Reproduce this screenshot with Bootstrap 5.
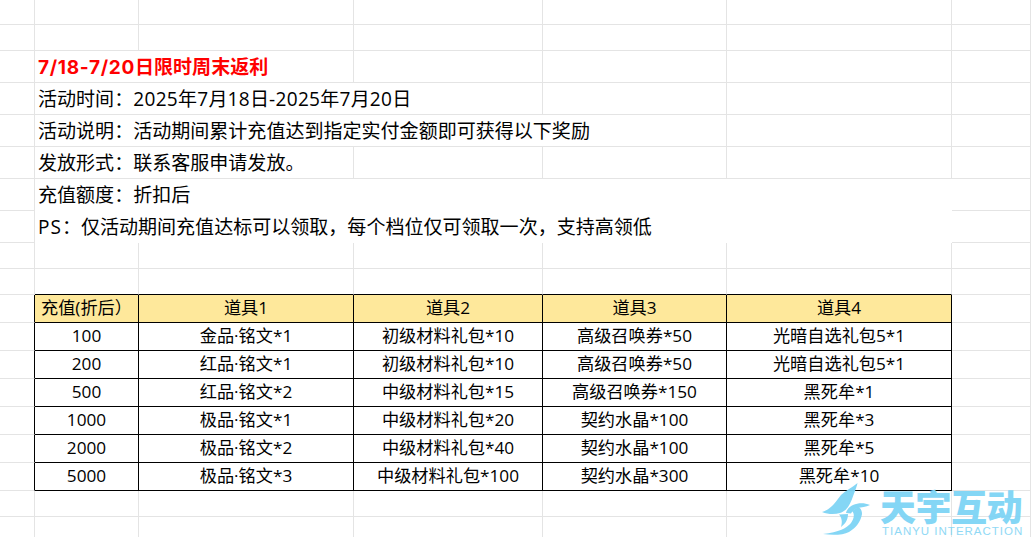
<!DOCTYPE html>
<html lang="zh-CN">
<head>
<meta charset="utf-8">
<title>7/18-7/20日限时周末返利</title>
<link href="https://cdn.jsdelivr.net/npm/bootstrap@5.3.0/dist/css/bootstrap.min.css" rel="stylesheet">
<style>
html,body{margin:0;height:537px;overflow:hidden;background:#fff}
body{font-family:"Open Sans","Noto Sans CJK SC",sans-serif;color:#000;position:relative}
.sheet{table-layout:fixed;width:1031px;border-collapse:separate;border-spacing:0}
.sheet td{border:0 solid #e4e4e4;border-width:0 1px 1px 0;padding:0;white-space:nowrap;vertical-align:middle;overflow:visible;line-height:1}
.c0{width:35px}.c1{width:104px}.c2{width:215px}.c3{width:189px}.c4{width:184px}.c5{width:225px}.c6{width:79px}
.h25{height:25px}.h26{height:26px}.h28{height:28px}.h32{height:32px}.h21{height:21px}
.sheet td.note{font-size:19.05px;padding:2px 0 0 3px}
.sheet td.note-title{font-family:Inter,"Noto Sans CJK SC",sans-serif;font-weight:700;color:#f00}
.digits{letter-spacing:.35px}
.note-title .digits{letter-spacing:.7px}
.latin-wide{letter-spacing:1px}
.sheet td.blank{border-right-width:0;border-bottom-width:0}
.sheet td.edge-r{border-right-color:#000}
.sheet td.edge-b{border-bottom-color:#000}
.sheet td.cell{border-color:#000;font-size:17.2px;text-align:center;padding-bottom:1px}
.sheet td.head{background:#fee89b}
.brandmark{position:absolute;left:820px;top:480px;width:211px;height:57px;color:#7ed4f5;pointer-events:none;opacity:.95}
.brandmark svg{position:absolute;left:0;top:0}
.brand-cn{position:absolute;left:60px;top:7px;display:flex;font-family:"Noto Sans CJK SC",sans-serif;font-size:36px;line-height:36px;font-weight:900;letter-spacing:-.5px;white-space:nowrap}
.brand-en{position:absolute;left:62px;top:46px;font-family:"Liberation Sans",sans-serif;font-size:11.5px;line-height:11px;letter-spacing:1px;white-space:nowrap;opacity:.9}
</style>
</head>
<body>
<table class="sheet">
<colgroup><col class="c0"><col class="c1"><col class="c2"><col class="c3"><col class="c4"><col class="c5"><col class="c6"></colgroup>
<tbody>
<tr class="h25"><td></td><td></td><td></td><td></td><td></td><td></td><td></td></tr>
<tr class="h26"><td></td><td></td><td></td><td></td><td></td><td></td><td></td></tr>
<tr class="h32"><td></td><td class="note note-title" colspan="2"><span class="digits">7/18-7/20</span>日限时周末返利</td><td></td><td></td><td></td><td></td></tr>
<tr class="h32"><td></td><td class="note" colspan="3">活动时间：<span class="digits">2025</span>年<span class="digits">7</span>月<span class="digits">18</span>日<span class="digits">-2025</span>年<span class="digits">7</span>月<span class="digits">20</span>日</td><td></td><td></td><td></td></tr>
<tr class="h32"><td></td><td class="note" colspan="4">活动说明：活动期间累计充值达到指定实付金额即可获得以下奖励</td><td></td><td></td></tr>
<tr class="h32"><td></td><td class="note" colspan="2">发放形式：联系客服申请发放。</td><td></td><td></td><td></td><td></td></tr>
<tr class="h32"><td></td><td class="note blank" colspan="5">充值额度：折扣后</td><td></td></tr>
<tr class="h32"><td></td><td class="note blank" colspan="5"><span class="latin-wide">PS</span>：仅活动期间充值达标可以领取，每个档位仅可领取一次，支持高领低</td><td></td></tr>
<tr class="h26"><td></td><td></td><td></td><td></td><td></td><td></td><td></td></tr>
<tr class="h26"><td></td><td class="edge-b"></td><td class="edge-b"></td><td class="edge-b"></td><td class="edge-b"></td><td class="edge-b"></td><td></td></tr>
<tr class="h28"><td class="edge-r"></td><td class="cell head">充值(折后）</td><td class="cell head">道具1</td><td class="cell head">道具2</td><td class="cell head">道具3</td><td class="cell head">道具4</td><td></td></tr>
<tr class="h28"><td class="edge-r"></td><td class="cell">100</td><td class="cell">金品·铭文*1</td><td class="cell">初级材料礼包*10</td><td class="cell">高级召唤券*50</td><td class="cell">光暗自选礼包5*1</td><td></td></tr>
<tr class="h28"><td class="edge-r"></td><td class="cell">200</td><td class="cell">红品·铭文*1</td><td class="cell">初级材料礼包*10</td><td class="cell">高级召唤券*50</td><td class="cell">光暗自选礼包5*1</td><td></td></tr>
<tr class="h28"><td class="edge-r"></td><td class="cell">500</td><td class="cell">红品·铭文*2</td><td class="cell">中级材料礼包*15</td><td class="cell">高级召唤券*150</td><td class="cell">黑死牟*1</td><td></td></tr>
<tr class="h28"><td class="edge-r"></td><td class="cell">1000</td><td class="cell">极品·铭文*1</td><td class="cell">中级材料礼包*20</td><td class="cell">契约水晶*100</td><td class="cell">黑死牟*3</td><td></td></tr>
<tr class="h28"><td class="edge-r"></td><td class="cell">2000</td><td class="cell">极品·铭文*2</td><td class="cell">中级材料礼包*40</td><td class="cell">契约水晶*100</td><td class="cell">黑死牟*5</td><td></td></tr>
<tr class="h28"><td class="edge-r"></td><td class="cell">5000</td><td class="cell">极品·铭文*3</td><td class="cell">中级材料礼包*100</td><td class="cell">契约水晶*300</td><td class="cell">黑死牟*10</td><td></td></tr>
<tr class="h26"><td></td><td></td><td></td><td></td><td></td><td></td><td></td></tr>
<tr class="h21"><td></td><td></td><td></td><td></td><td></td><td></td><td></td></tr>
</tbody>
</table>
<div class="brandmark" aria-label="天宇互动 TIANYU INTERACTION">
<svg width="60" height="57" viewBox="820 480 60 57" fill="currentColor" aria-hidden="true">
<path d="M857.5 483C852 488 846 490 841 495C836 501 832 509 822 512C828 514.500 835 514.500 840 513C843 512 846 510 848 507C851 503 853 496 855 491C856 488 857 486 857.500 483Z"/>
<path d="M870 505C864 502.500 858 503 853 505C849 507 846.500 510 846 513L851 513.500C852 511 855 509 858 508C861 507 866 507 870 505Z"/>
<path d="M852 511C855 514 854 519 851 523C847 528 839 532 823 534C833 535.500 843 535 849 532C856 528 861 521 862 514C862 511 861 508 858 507Z"/>
<path d="M839 514.500C842 518 842.500 522 841 527C845 524 848 520 848 514Z"/>
</svg>
<div class="brand-cn"><span>天</span><span>宇</span><span>互</span><span>动</span></div>
<div class="brand-en">TIANYU INTERACTION</div>
</div>
<script src="https://cdn.jsdelivr.net/npm/bootstrap@5.3.0/dist/js/bootstrap.bundle.min.js"></script>
</body>
</html>
